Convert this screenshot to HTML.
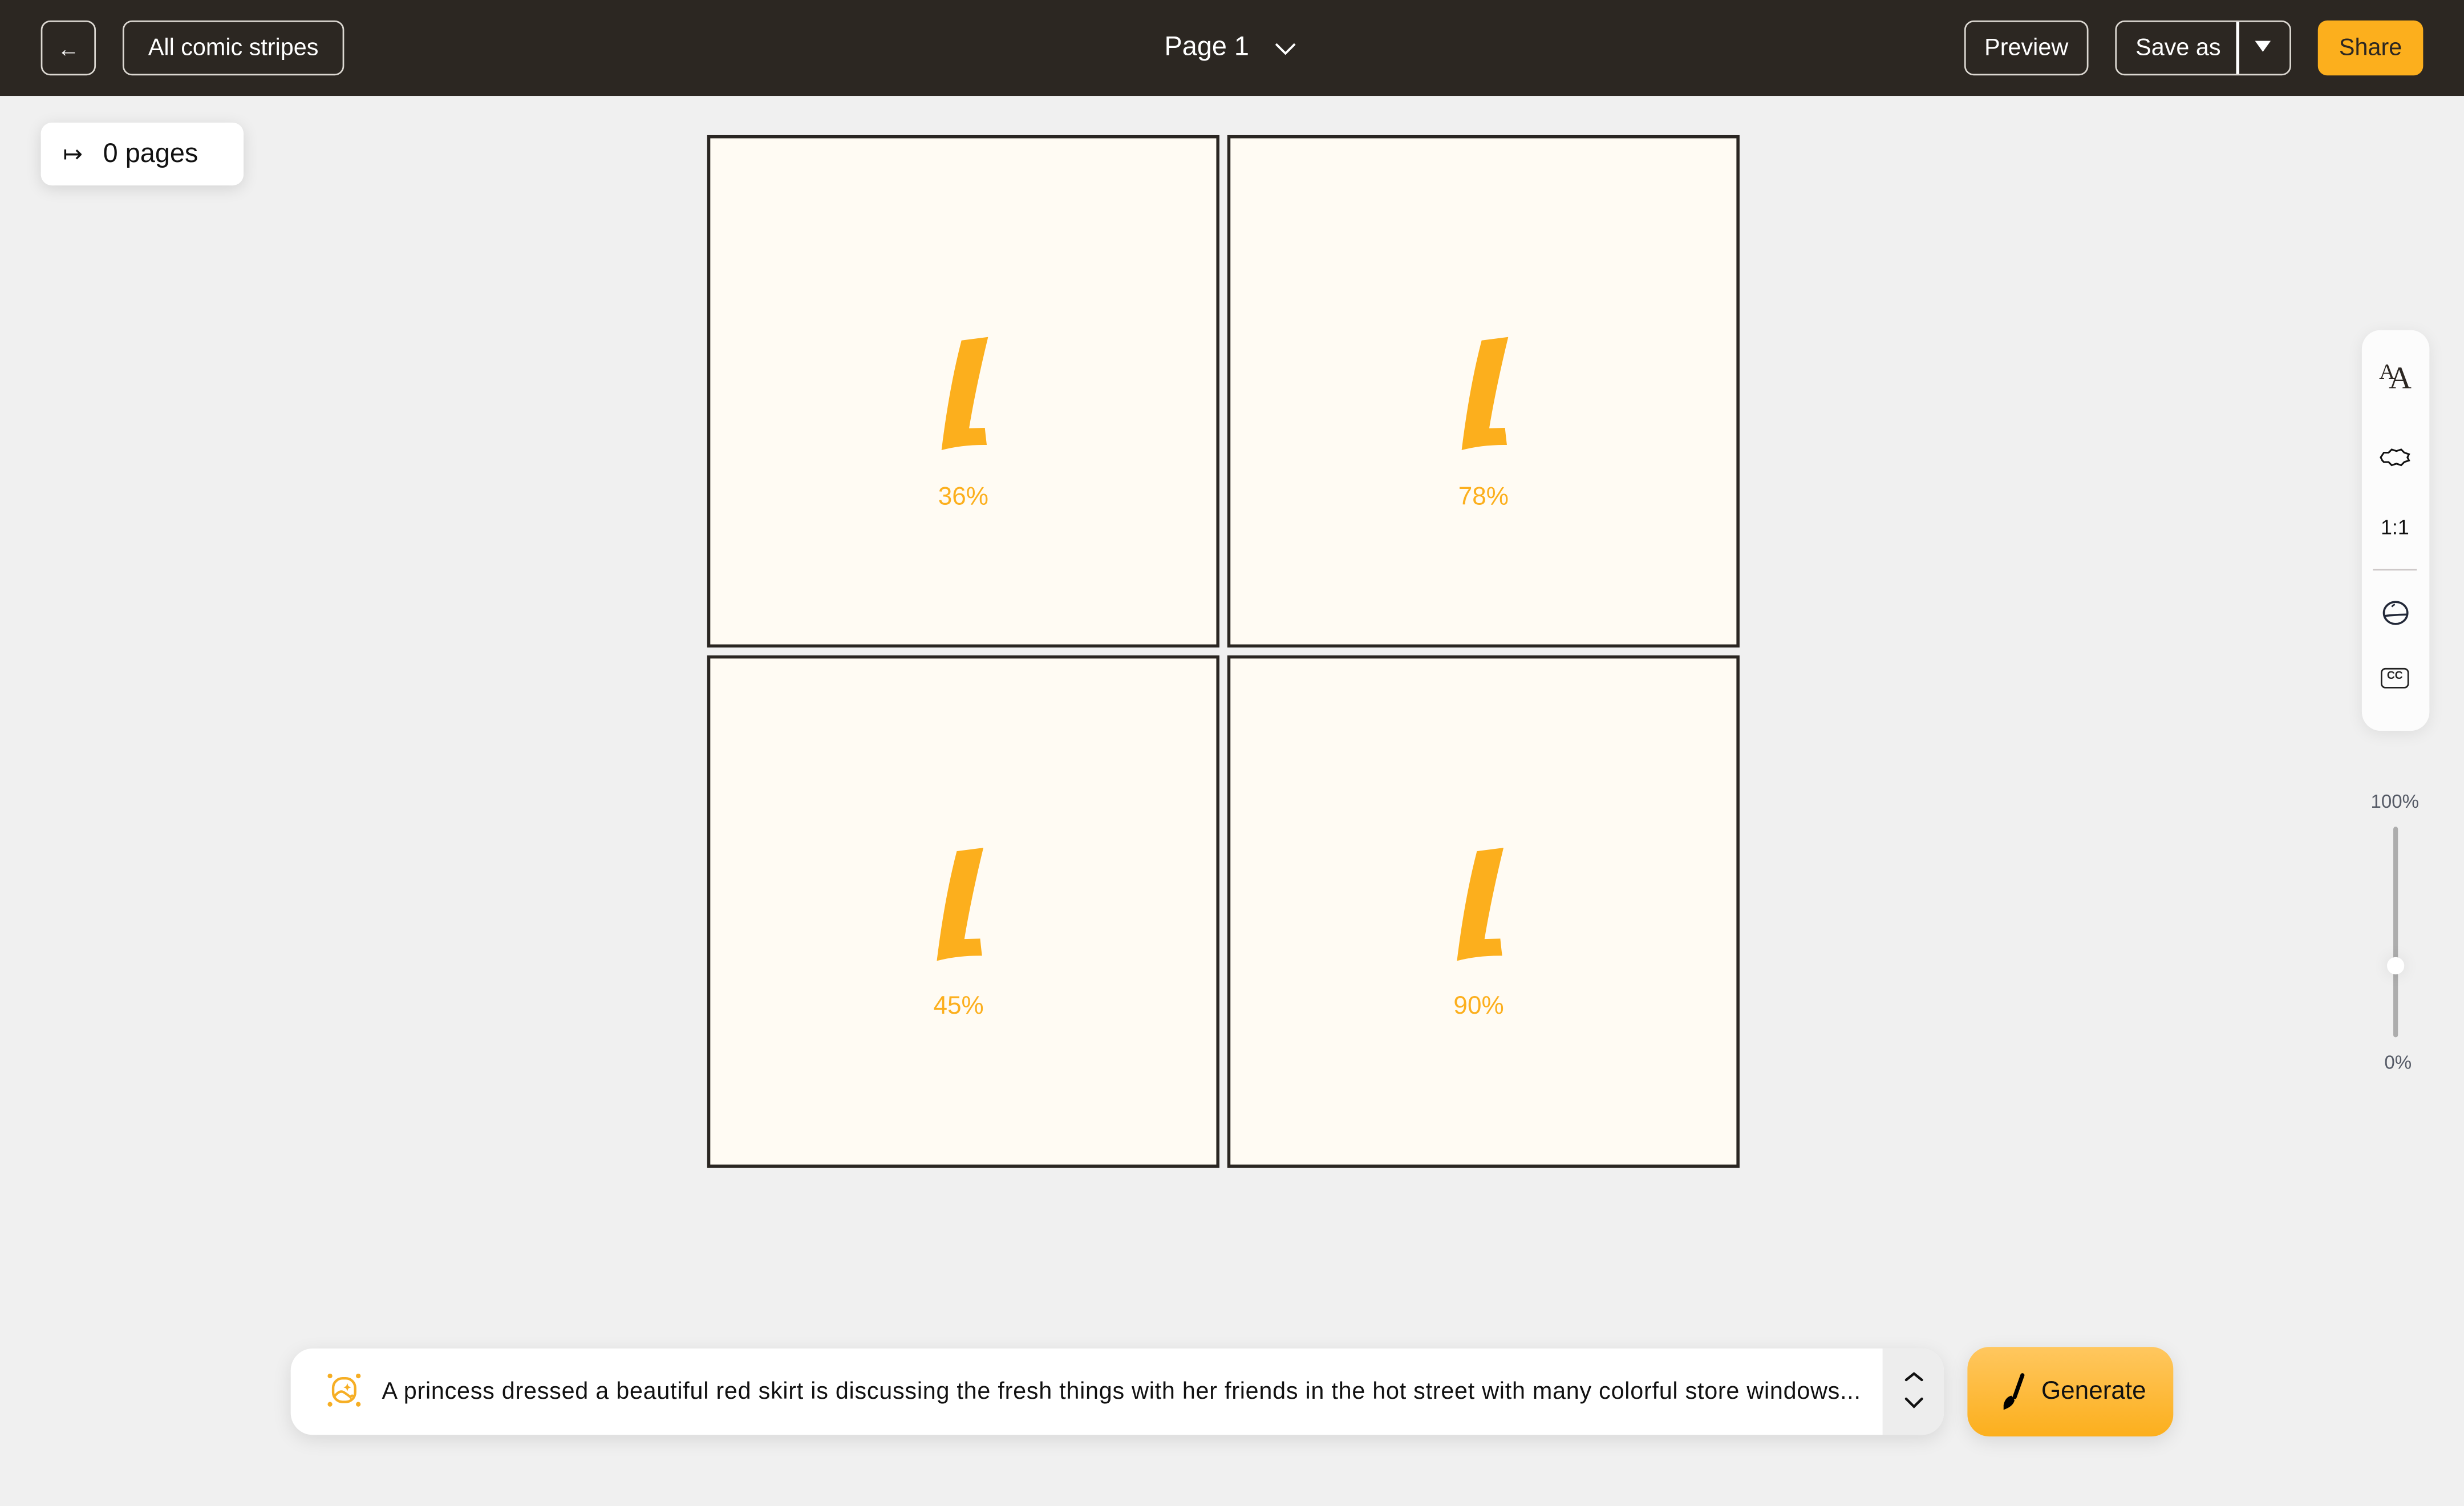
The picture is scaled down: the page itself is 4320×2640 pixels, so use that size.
<!DOCTYPE html>
<html><head><meta charset="utf-8"><style>
html,body{margin:0;padding:0;width:4320px;height:2640px;overflow:hidden;background:#f0f0f0}
#w{position:absolute;left:0;top:0;width:1568px;height:958px;transform:scale(2.7551);transform-origin:0 0;font-family:"Liberation Sans",sans-serif;background:#f0f0f0}
.a{position:absolute}
.hb{position:absolute;border:1.5px solid #dcd8d2;border-radius:6px;color:#fff;box-sizing:border-box;display:flex;align-items:center;justify-content:center;font-size:15px}
.p{position:absolute;border:2px solid #2a2622;background:#fffbf3;box-sizing:border-box}
.pc{position:absolute;color:#fcaf1d;font-size:16px;width:80px;text-align:center}
.L{position:absolute;width:72.6px;height:130.7px}
</style></head><body><div id="w">
<div class="a" style="left:0;top:0;width:1568px;height:61px;background:#2c2722"></div>
<div class="hb" style="left:26px;top:13px;width:35px;height:35px;font-size:14px">&#8592;</div>
<div class="hb" style="left:78px;top:13px;width:141px;height:35px;font-weight:300">All comic stripes</div>
<div class="a" style="left:741px;top:20px;color:#fff;font-size:17px">Page 1</div>
<svg class="a" style="left:810px;top:25px" width="16" height="12" viewBox="0 0 16 12"><path d="M2 3 L8 9 L14 3" stroke="#fff" stroke-width="1.4" fill="none"/></svg>
<div class="hb" style="left:1250px;top:13px;width:79px;height:35px">Preview</div>
<div class="hb" style="left:1346px;top:13px;width:112px;height:35px;justify-content:flex-start;padding-left:12px">Save as</div>
<div class="a" style="left:1423px;top:14px;width:1.5px;height:33px;background:#fff"></div>
<div class="a" style="left:1435px;top:26px;width:0;height:0;border-left:5px solid transparent;border-right:5px solid transparent;border-top:7px solid #fff"></div>
<div class="a" style="left:1475px;top:13px;width:67px;height:35px;background:#fcaf1d;border-radius:6px;color:#2c2722;font-size:15px;display:flex;align-items:center;justify-content:center">Share</div>

<div class="a" style="left:26px;top:78px;width:129px;height:40px;background:#fff;border-radius:7px;box-shadow:0 2px 10px rgba(0,0,0,.12);display:flex;align-items:center;font-size:17px;color:#111"><span style="margin-left:14px;font-size:15px;margin-right:13px">&#8614;</span>0 pages</div>

<div class="p" style="left:450px;top:86px;width:326px;height:326px"></div>
<div class="p" style="left:781px;top:86px;width:326px;height:326px"></div>
<div class="p" style="left:450px;top:417px;width:326px;height:326px"></div>
<div class="p" style="left:781px;top:417px;width:326px;height:326px"></div>

<svg class="L" style="left:580.7px;top:196px" viewBox="0 0 600 1080"><path d="M255 170 L395 152 Q330 420 295 632 L378 630 Q383 680 388 720 Q260 718 150 747 Q190 420 255 170Z" fill="#fcaf1d"/></svg>
<svg class="L" style="left:911.7px;top:196px" viewBox="0 0 600 1080"><path d="M255 170 L395 152 Q330 420 295 632 L378 630 Q383 680 388 720 Q260 718 150 747 Q190 420 255 170Z" fill="#fcaf1d"/></svg>
<svg class="L" style="left:577.7px;top:521px" viewBox="0 0 600 1080"><path d="M255 170 L395 152 Q330 420 295 632 L378 630 Q383 680 388 720 Q260 718 150 747 Q190 420 255 170Z" fill="#fcaf1d"/></svg>
<svg class="L" style="left:908.7px;top:521px" viewBox="0 0 600 1080"><path d="M255 170 L395 152 Q330 420 295 632 L378 630 Q383 680 388 720 Q260 718 150 747 Q190 420 255 170Z" fill="#fcaf1d"/></svg>
<div class="pc" style="left:573px;top:308px">36%</div>
<div class="pc" style="left:904px;top:308px">78%</div>
<div class="pc" style="left:570px;top:632px">45%</div>
<div class="pc" style="left:901px;top:632px">90%</div>

<div class="a" style="left:1503px;top:210px;width:43px;height:255px;background:#fcfcfc;border-radius:12px;box-shadow:0 2px 10px rgba(0,0,0,.08)"></div>
<div class="a" style="left:1514px;top:230px;font-family:'Liberation Serif',serif;color:#2c2722"><span style="font-size:14px;vertical-align:top">A</span><span style="font-size:20px;margin-left:-4px">A</span></div>
<svg class="a" style="left:1513px;top:283px" width="22" height="16" viewBox="0 0 22 16"><path d="M2 8 L4 5 L7 5 L9 3 L12 4 L15 3 L17 5 L20 6 L19 8 L20 10 L17 11 L15 13 L12 12 L9 13 L7 11 L4 11 L3 10Z" stroke="#111" stroke-width="1.1" fill="none"/></svg>
<div class="a" style="left:1515px;top:328px;font-size:13px;color:#111">1:1</div>
<div class="a" style="left:1510px;top:362px;width:28px;height:1px;background:#cbc6c6"></div>
<svg class="a" style="left:1514px;top:380px" width="22" height="20" viewBox="0 0 22 20"><ellipse cx="10.5" cy="10" rx="7.5" ry="7" stroke="#222838" stroke-width="1.3" fill="none"/><path d="M3 12 Q10.5 11 18 11" stroke="#222838" stroke-width="1.3" fill="none"/><path d="M8 6 Q9 5 10 4.5" stroke="#222838" stroke-width="1" fill="none"/></svg>
<div class="a" style="left:1515px;top:425px;width:18px;height:13px;border:1.4px solid #222;border-radius:3px;box-sizing:border-box;font-size:7px;font-weight:bold;text-align:center;line-height:10px;color:#222">CC</div>

<div class="a" style="left:1504px;top:503px;width:40px;text-align:center;font-size:12px;color:#555a66">100%</div>
<div class="a" style="left:1523px;top:526px;width:3px;height:134px;background:#adadad;border-radius:2px"></div>
<div class="a" style="left:1519px;top:609px;width:11px;height:11px;border-radius:50%;background:#fff;box-shadow:0 0 10px rgba(0,0,0,.1)"></div>
<div class="a" style="left:1506px;top:669px;width:40px;text-align:center;font-size:12px;color:#555a66">0%</div>

<div class="a" style="left:185px;top:858px;width:1052px;height:55px;background:#fff;border-radius:14px;box-shadow:0 3px 12px rgba(0,0,0,.1);overflow:hidden">
<div class="a" style="left:1013px;top:0;width:39px;height:55px;background:#ededed"></div>
<svg class="a" style="left:1019px;top:12px" width="28" height="32" viewBox="0 0 28 32"><path d="M9 8 L14 4 L19 8 M9 20 L14 25 L19 20" stroke="#111" stroke-width="1.6" fill="none" stroke-linecap="round"/></svg>
</div>
<svg class="a" style="left:205px;top:872px" width="28" height="28" viewBox="0 0 28 28"><g fill="#f6ae24"><circle cx="5" cy="3.5" r="1.5"/><circle cx="23" cy="3.5" r="1.5"/><circle cx="5" cy="21.5" r="1.5"/><circle cx="23" cy="21.5" r="1.5"/></g><rect x="7" y="5" width="14" height="15" rx="6" stroke="#f6ae24" stroke-width="1.6" fill="none"/><path d="M7.5 17 Q11 12 14 14 Q17 16 18 17 Q19 15 20.5 17" stroke="#f6ae24" stroke-width="1.5" fill="none"/><path d="M16 8 L16.7 10 L18.5 10.7 L16.7 11.4 L16 13.2 L15.3 11.4 L13.5 10.7 L15.3 10Z" fill="#f6ae24"/></svg>
<div class="a" style="left:243px;top:877px;font-size:15px;color:#111;white-space:nowrap;letter-spacing:0.27px">A princess dressed a beautiful red skirt is discussing the fresh things with her friends in the hot street with many colorful store windows...</div>

<div class="a" style="left:1252px;top:857px;width:131px;height:57px;border-radius:14px;background:linear-gradient(#ffc75f,#fcaf1d);box-shadow:0 3px 12px rgba(0,0,0,.1)"></div>
<svg class="a" style="left:1272px;top:872px" width="18" height="26" viewBox="0 0 18 26"><path d="M15 3 L10 17" stroke="#000" stroke-width="2.6" stroke-linecap="round"/><path d="M8 16 Q4 17 3 22 L3 25 Q9 23 10 19Z" fill="#000"/></svg>
<div class="a" style="left:1299px;top:877px;font-size:16px;color:#111">Generate</div>
</div></body></html>
